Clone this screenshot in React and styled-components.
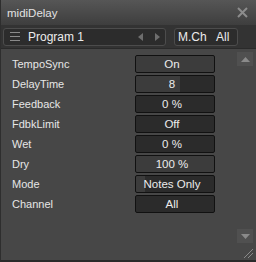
import React from "react";
import styled, { createGlobalStyle } from "styled-components";

const Global = createGlobalStyle`
  html, body { margin: 0; padding: 0; background: #474747; }
  body { font-family: "Liberation Sans", Arial, sans-serif; }
  * { box-sizing: border-box; }
`;

const Window = styled.div`
  position: relative;
  width: 256px;
  height: 262px;
  display: flex;
  flex-direction: column;
  background: #474747;
  border-left: 1px solid #2e2e2e;
  border-bottom: 2px solid #2a2a2a;
  overflow: hidden;
  color: #e4e4e4;
  font-size: 11px;
`;

const TitleBar = styled.div`
  height: 25px;
  flex: none;
  display: flex;
  align-items: center;
  justify-content: space-between;
  padding: 0 8px 0 6px;
  background: linear-gradient(#565656, #3e3e3e);
  font-size: 11.5px;
  color: #e2e2e2;
`;

const CloseIcon = () => (
  <svg width="11" height="11" viewBox="0 0 11 11">
    <path d="M1 1 L10 10 M10 1 L1 10" stroke="#8c8c8c" strokeWidth="2" />
  </svg>
);

const HeaderBar = styled.div`
  height: 24px;
  flex: none;
  display: flex;
  align-items: center;
  gap: 8px;
  padding: 0 18px 0 2px;
  background: #333333;
  border-bottom: 1px solid #2a2a2a;
`;

const HeaderBox = styled.div`
  height: 18px;
  display: flex;
  align-items: center;
  border: 1px solid #4c4c4c;
  border-radius: 3px;
  background: #2c2c2c;
  flex: ${(p) => (p.$grow ? "1" : "none")};
  width: ${(p) => p.$width || "auto"};
`;

const Hamburger = () => (
  <svg width="10" height="9" viewBox="0 0 10 9" style={{ marginLeft: 6 }}>
    <path d="M0 0.5 H10 M0 4.5 H10 M0 8.5 H10" stroke="#8a8a8a" strokeWidth="1" />
  </svg>
);

const ProgramName = styled.span`
  flex: 1;
  margin-left: 8px;
  font-size: 12px;
  color: #ececec;
`;

const Arrows = styled.div`
  display: flex;
  gap: 12px;
  margin-right: 5px;
`;

const Arrow = ({ dir }) => (
  <svg width="5" height="8" viewBox="0 0 5 8">
    <path d={dir === "left" ? "M5 0 L0 4 L5 8 Z" : "M0 0 L5 4 L0 8 Z"} fill="#6e6e6e" />
  </svg>
);

const ChLabel = styled.span`
  margin-left: 3px;
  width: 38px;
  font-size: 12px;
  color: #ececec;
`;

const ChValue = styled.span`
  font-size: 12px;
  color: #ececec;
`;

const Body = styled.div`
  flex: 1;
  display: flex;
  padding: 0 3px 0 0;
`;

const ParamList = styled.div`
  flex: 1;
  display: flex;
  flex-direction: column;
  padding: 6px 0 0 10px;
`;

const Row = styled.div`
  height: 20px;
  display: grid;
  grid-template-columns: 124px 80px;
  align-items: start;
`;

const Label = styled.span`
  line-height: 18px;
  padding-left: 1px;
  color: #e6e6e6;
`;

const ValueBox = styled.div`
  height: 18px;
  border: 1px solid #111;
  border-radius: 2px;
  background: linear-gradient(
    to right,
    #3c3c3c 0,
    #3c3c3c ${(p) => p.$fill * 100}%,
    #2b2b2b ${(p) => p.$fill * 100}%
  );
  display: flex;
  align-items: center;
  justify-content: center;
  padding-right: 6px;
  line-height: 16px;
  color: #ececec;
  font-size: 11.5px;
`;

const ScrollBar = styled.div`
  width: 16px;
  display: flex;
  flex-direction: column;
  justify-content: space-between;
  padding: 3px 0 17px;
`;

const ScrollButton = styled.div`
  height: 14px;
  background: #505050;
  display: flex;
  align-items: center;
  justify-content: center;
`;

const Tri = ({ up }) => (
  <svg width="9" height="5" viewBox="0 0 9 5">
    <path d={up ? "M0 5 L4.5 0 L9 5 Z" : "M0 0 L4.5 5 L9 0 Z"} fill="#8a8a8a" />
  </svg>
);

const Grip = styled.svg`
  position: absolute;
  right: 3px;
  bottom: 2px;
`;

const params = [
  { label: "TempoSync", value: "On", fill: 1 },
  { label: "DelayTime", value: "8", fill: 0.56 },
  { label: "Feedback", value: "0 %", fill: 0 },
  { label: "FdbkLimit", value: "Off", fill: 0 },
  { label: "Wet", value: "0 %", fill: 0 },
  { label: "Dry", value: "100 %", fill: 1 },
  { label: "Mode", value: "Notes Only", fill: 0.12 },
  { label: "Channel", value: "All", fill: 0 },
];

export default function App() {
  return (
    <>
      <Global />
      <Window>
        <TitleBar>
          <span>midiDelay</span>
          <CloseIcon />
        </TitleBar>
        <HeaderBar>
          <HeaderBox $grow>
            <Hamburger />
            <ProgramName>Program 1</ProgramName>
            <Arrows>
              <Arrow dir="left" />
              <Arrow dir="right" />
            </Arrows>
          </HeaderBox>
          <HeaderBox $width="64px">
            <ChLabel>M.Ch</ChLabel>
            <ChValue>All</ChValue>
          </HeaderBox>
        </HeaderBar>
        <Body>
          <ParamList>
            {params.map((p) => (
              <Row key={p.label}>
                <Label>{p.label}</Label>
                <ValueBox $fill={p.fill}>{p.value}</ValueBox>
              </Row>
            ))}
          </ParamList>
          <ScrollBar>
            <ScrollButton>
              <Tri up />
            </ScrollButton>
            <ScrollButton>
              <Tri />
            </ScrollButton>
          </ScrollBar>
        </Body>
        <Grip width="9" height="9" viewBox="0 0 9 9">
          <path d="M9 0 L0 9 M9 4 L4 9" stroke="#8a8a8a" strokeWidth="1" />
        </Grip>
      </Window>
    </>
  );
}
